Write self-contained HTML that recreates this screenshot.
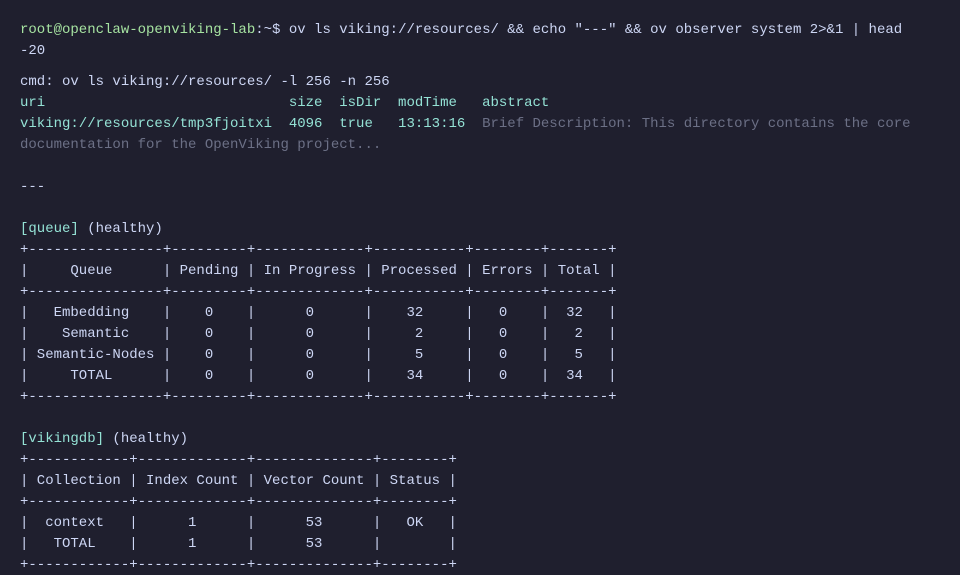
<!DOCTYPE html>
<html><head><meta charset="utf-8"><style>
html,body{margin:0;padding:0;background:#1f1f2e;width:960px;height:575px;overflow:hidden}
pre{margin:0;padding:20px 0 0 20px;font-family:"Liberation Mono",monospace;font-size:14px;line-height:21px;color:#cdd6f4;white-space:pre}
.g{color:#a6e3a1}.t{color:#94e2d5}.d{color:#6c7086}
.gap{display:block;height:10px}
</style></head><body><pre><span class="g">root@openclaw-openviking-lab</span>:~$ ov ls viking://resources/ &amp;&amp; echo "---" &amp;&amp; ov observer system 2&gt;&amp;1 | head
-20
<span class="gap"></span>cmd: ov ls viking://resources/ -l 256 -n 256
<span class="t">uri                             size  isDir  modTime   abstract</span>
<span class="t">viking://resources/tmp3fjoitxi  4096  true   13:13:16</span>  <span class="d">Brief Description: This directory contains the core</span>
<span class="d">documentation for the OpenViking project...</span>

---

<span class="t">[queue]</span> (healthy)
+----------------+---------+-------------+-----------+--------+-------+
|     Queue      | Pending | In Progress | Processed | Errors | Total |
+----------------+---------+-------------+-----------+--------+-------+
|   Embedding    |    0    |      0      |    32     |   0    |  32   |
|    Semantic    |    0    |      0      |     2     |   0    |   2   |
| Semantic-Nodes |    0    |      0      |     5     |   0    |   5   |
|     TOTAL      |    0    |      0      |    34     |   0    |  34   |
+----------------+---------+-------------+-----------+--------+-------+

<span class="t">[vikingdb]</span> (healthy)
+------------+-------------+--------------+--------+
| Collection | Index Count | Vector Count | Status |
+------------+-------------+--------------+--------+
|  context   |      1      |      53      |   OK   |
|   TOTAL    |      1      |      53      |        |
+------------+-------------+--------------+--------+
</pre></body></html>
